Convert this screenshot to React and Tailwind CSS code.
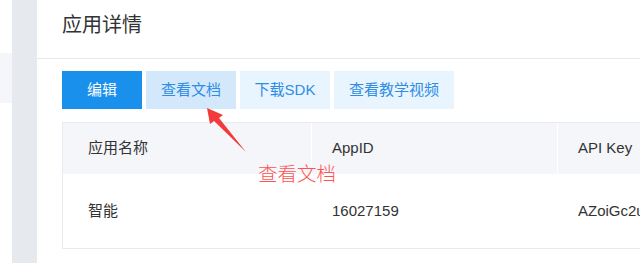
import React from "react";

const buttons = [
  { label: "编辑", className: "w-[80px] bg-[#1890ec] text-white" },
  { label: "查看文档", className: "w-[90px] bg-[#d3e9fb] text-[#2f8de4]" },
  { label: "下载SDK", className: "w-[90px] bg-[#e8f4fe] text-[#2f8de4]" },
  { label: "查看教学视频", className: "w-[120px] bg-[#e8f4fe] text-[#2f8de4]" },
];

const columns = [
  { title: "应用名称", value: "智能", className: "w-[249px] pl-[25px]" },
  { title: "AppID", value: "16027159", className: "w-[246px] pl-[20px]" },
  { title: "API Key", value: "AZoiGc2uQmWfT8kLx", className: "w-[200px] pl-[20px]" },
];

export default function App() {
  return (
    <div className="flex h-[263px] w-[640px] overflow-hidden bg-white font-['Liberation_Sans','Noto_Sans_CJK_SC',sans-serif] text-[#333]">
      {/* Sidebar edge */}
      <div className="flex w-3 shrink-0 flex-col">
        <div className="h-[53px]" />
        <div className="h-[50px] bg-[#f4f6fa]" />
      </div>
      <div className="w-[25px] shrink-0 bg-[#e6e9ee]" />

      {/* Main */}
      <div className="relative min-w-0 flex-1 overflow-hidden">
        <div className="flex h-[59px] items-center border-b border-[#e8e8e8] pl-[25px] pb-[8px] text-[20px]">
          应用详情
        </div>

        <div className="pl-[25px] pt-3">
          <div className="flex gap-1">
            {buttons.map((b) => (
              <div
                key={b.label}
                className={`flex h-[38px] items-center justify-center text-[15px] ${b.className}`}
              >
                {b.label}
              </div>
            ))}
          </div>

          {/* Table */}
          <div className="mt-[13px] w-[700px] border border-[#e8ebf2]">
            <div className="flex h-[51px] bg-[#f4f6fa] text-[15px]">
              {columns.map((c, i) => (
                <div
                  key={c.title}
                  className={`flex shrink-0 items-center ${c.className} ${i < columns.length - 1 ? "border-r border-white" : ""}`}
                >
                  {c.title}
                </div>
              ))}
            </div>
            <div className="flex h-[74px] text-[15px]">
              {columns.map((c, i) => (
                <div
                  key={c.title}
                  className={`flex shrink-0 items-center ${c.className} ${i < columns.length - 1 ? "border-r border-transparent" : ""}`}
                >
                  {c.value}
                </div>
              ))}
            </div>
          </div>
        </div>

        {/* Annotation */}
        <svg className="absolute left-0 top-0" width="603" height="263">
          <polygon
            points="170,108 186,115 182,118 209,152 177,121 173,124"
            fill="#f33b3b"
          />
        </svg>
        <div className="absolute left-[221px] top-[163px] text-[19.5px] font-light leading-none text-[#ff5252] font-['Noto_Sans_CJK_SC',serif]">
          查看文档
        </div>
      </div>
    </div>
  );
}
